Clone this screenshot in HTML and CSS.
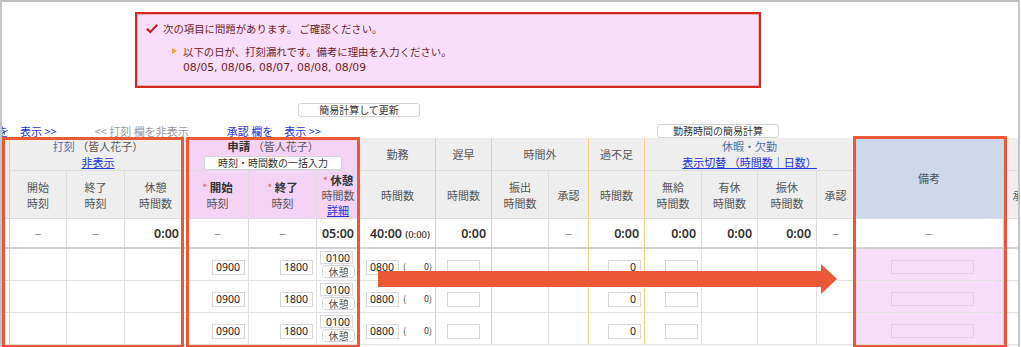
FILE: index.html
```html
<!DOCTYPE html>
<html lang="ja">
<head>
  <meta charset="UTF-8" />
  <title>勤務表</title>
  <link rel="stylesheet" href="styles.css">
</head>
<body>
<div class="frame">

  <div class="alert">
    <p class="alert-title">
      <svg class="check" width="12" height="10" viewBox="0 0 12 10"><path d="M0 5.6 L1.8 4 L4.4 6.4 L10.4 0 L12 1.4 L4.4 9.6 Z" fill="#c3242b"/></svg>
      次の項目に問題があります。&nbsp;ご確認ください。
    </p>
    <div class="alert-item">
      <span class="tri"></span>
      <p>以下の日が、打刻漏れです。備考に理由を入力ください。<br><span class="dates">08/05, 08/06, 08/07, 08/08, 08/09</span></p>
    </div>
  </div>

  <div class="calc-row">
    <button class="btn calc-btn">簡易計算して更新</button>
  </div>

  <div class="toggle-row">
    <a class="toggle-first" href="#">欄を　表示 &gt;&gt;</a>
    <span class="toggle-hide">&lt;&lt; 打刻 欄を非表示</span>
    <a class="toggle-approve" href="#">承認 欄を　表示 &gt;&gt;</a>
    <button class="btn work-btn">勤務時間の簡易計算</button>
  </div>

  <table class="sheet">
    <colgroup>
      <col style="width:8px"><col style="width:57px"><col style="width:58px"><col style="width:62px">
      <col style="width:62px"><col style="width:68px"><col style="width:43px">
      <col style="width:76px"><col style="width:56px"><col style="width:57px"><col style="width:40px">
      <col style="width:56px"><col style="width:57px"><col style="width:56px"><col style="width:59px"><col style="width:38px">
      <col style="width:149px"><col style="width:40px">
    </colgroup>
    <thead>
      <tr class="head1">
        <th class="sep" rowspan="2"></th>
        <th colspan="3"><span class="blue">打刻</span> （皆人花子）<br><a href="#">非表示</a></th>
        <th colspan="3" class="apply"><b class="dark">申請</b> （皆人花子）<br><button class="btn bulk-btn">時刻・時間数の一括入力</button></th>
        <th class="sep">勤務</th>
        <th class="sep blue">遅早</th>
        <th colspan="2" class="sep blue">時間外</th>
        <th class="sep">過不足</th>
        <th colspan="4"><span class="blue">休暇・欠勤</span><br><a href="#">表示切替 （時間数｜日数）</a></th>
        <th rowspan="2" class="note sep">備考</th>
        <th></th>
      </tr>
      <tr class="head2">
        <th>開始<br>時刻</th>
        <th>終了<br>時刻</th>
        <th>休憩<br>時間数</th>
        <th class="apply"><span class="req">*</span> <b class="dark">開始</b><br>時刻</th>
        <th class="apply"><span class="req">*</span> <b class="dark">終了</b><br>時刻</th>
        <th class="apply tight"><span class="req">*</span> <b class="dark">休憩</b><br>時間数<br><a href="#">詳細</a></th>
        <th class="sep">時間数</th>
        <th class="sep">時間数</th>
        <th>振出<br>時間数</th>
        <th class="sep blue">承認</th>
        <th class="sep">時間数</th>
        <th>無給<br>時間数</th>
        <th>有休<br>時間数</th>
        <th>振休<br>時間数</th>
        <th class="blue">承認</th>
        <th class="blue">承認</th>
      </tr>
    </thead>
    <tbody>
      <tr class="total">
        <td class="sep"></td>
        <td class="dash">−</td>
        <td class="dash">−</td>
        <td class="num wide">0:00</td>
        <td class="dash">−</td>
        <td class="dash">−</td>
        <td class="num">05:00</td>
        <td class="num sep">40:00 <small>(0:00)</small></td>
        <td class="num sep">0:00</td>
        <td></td>
        <td class="dash sep">−</td>
        <td class="num sep">0:00</td>
        <td class="num">0:00</td>
        <td class="num">0:00</td>
        <td class="num">0:00</td>
        <td class="dash">−</td>
        <td class="dash sep">−</td>
        <td></td>
      </tr>
      <tr class="day">
        <td class="sep"></td><td></td><td></td><td></td>
        <td class="right"><input class="box" value="0900"></td>
        <td class="right"><input class="box" value="1800"></td>
        <td class="rest"><input class="box" value="0100"><button class="btn rest-btn">休憩</button></td>
        <td class="sep work"><input class="box" value="0800"><span class="paren">(　　0)</span></td>
        <td class="sep"><input class="box" value=""></td>
        <td></td><td class="sep"></td>
        <td class="sep right"><input class="box" value="0"></td>
        <td class="right"><input class="box" value=""></td>
        <td></td><td></td><td></td>
        <td class="memo sep"><input class="memo-box"></td>
        <td></td>
      </tr>
      <tr class="day">
        <td class="sep"></td><td></td><td></td><td></td>
        <td class="right"><input class="box" value="0900"></td>
        <td class="right"><input class="box" value="1800"></td>
        <td class="rest"><input class="box" value="0100"><button class="btn rest-btn">休憩</button></td>
        <td class="sep work"><input class="box" value="0800"><span class="paren">(　　0)</span></td>
        <td class="sep"><input class="box" value=""></td>
        <td></td><td class="sep"></td>
        <td class="sep right"><input class="box" value="0"></td>
        <td class="right"><input class="box" value=""></td>
        <td></td><td></td><td></td>
        <td class="memo sep"><input class="memo-box"></td>
        <td></td>
      </tr>
      <tr class="day">
        <td class="sep"></td><td></td><td></td><td></td>
        <td class="right"><input class="box" value="0900"></td>
        <td class="right"><input class="box" value="1800"></td>
        <td class="rest"><input class="box" value="0100"><button class="btn rest-btn">休憩</button></td>
        <td class="sep work"><input class="box" value="0800"><span class="paren">(　　0)</span></td>
        <td class="sep"><input class="box" value=""></td>
        <td></td><td class="sep"></td>
        <td class="sep right"><input class="box" value="0"></td>
        <td class="right"><input class="box" value=""></td>
        <td></td><td></td><td></td>
        <td class="memo sep"><input class="memo-box"></td>
        <td></td>
      </tr>
    </tbody>
  </table>

  <!-- annotations drawn over the sheet -->
  <div class="mark mark-stamp"></div>
  <div class="mark mark-apply"></div>
  <div class="mark mark-note"></div>
  <svg class="arrow" width="462" height="34" viewBox="0 0 462 34">
    <rect x="2" y="9" width="444" height="16" fill="#eb5836"/>
    <polygon points="445,2 461,17 445,32" fill="#eb5836"/>
  </svg>
</div>
</body>
</html>
```

FILE: styles.css
```css
* {
  margin: 0;
  padding: 0;
  box-sizing: border-box;
}

body {
  font-family: "Noto Sans CJK JP", "Noto Sans", sans-serif;
  font-size: 11px;
  color: #333;
  background: #fff;
}

a {
  color: #1d33e0;
  text-decoration: underline;
}

.frame {
  position: relative;
  width: 1020px;
  height: 347px;
  border-top: 2px solid #bdbdbd;
  border-left: 2px solid #c6c6c6;
  border-right: 2px solid #c6c6c6;
  overflow: hidden;
}

/* === Alert === */
.alert {
  margin: 10px 0 0 133px;
  width: 626px;
  height: 76px;
  background: #f8defa;
  border: 2px solid #d32a20;
  box-shadow: inset 0 0 0 1px #f2aab4;
  padding: 7px 0 0 9px;
  color: #6f2120;
  font-size: 10.4px;
}

.alert-title {
  display: flex;
  align-items: center;
  gap: 5px;
  line-height: 16px;
}

.alert-item {
  display: flex;
  gap: 6px;
  margin: 7px 0 0 26px;
}

.alert-item p {
  line-height: 15px;
}

.dates {
  font-family: "DejaVu Sans", sans-serif;
  font-size: 10.8px;
}

.tri {
  width: 0;
  height: 0;
  margin-top: 4px;
  border-left: 5px solid #f2a33a;
  border-top: 3.5px solid transparent;
  border-bottom: 3.5px solid transparent;
}

/* === Buttons / toggles === */
.btn {
  background: #fff;
  border: 1px solid #d4d4d4;
  border-radius: 3px;
  font-family: "Noto Sans CJK JP", sans-serif;
  font-size: 10px;
  color: #333;
  height: 14px;
  line-height: 12px;
}

.calc-row {
  margin: 13px 0 0 296px;
  height: 14px;
}

.calc-btn {
  width: 122px;
}

.toggle-row {
  display: flex;
  align-items: center;
  height: 14px;
  margin-top: 9px;
  white-space: nowrap;
  line-height: 14px;
}

.toggle-first {
  margin-left: -15px;
}

.toggle-hide {
  margin-left: 38px;
  color: #9a9a9a;
}

.toggle-approve {
  margin-left: 38px;
}

.work-btn {
  width: 122px;
  margin-left: 336px;
}

/* === Sheet === */
.sheet {
  border-collapse: separate;
  border-spacing: 0;
  table-layout: fixed;
  width: 1042px;
}

.sheet th,
.sheet td {
  border-right: 1px solid #dcdcdc;
  border-bottom: 1px solid #dcdcdc;
  text-align: center;
  vertical-align: middle;
  white-space: nowrap;
  overflow: hidden;
}

.sheet th {
  background: #eee;
  color: #555;
  font-weight: normal;
  line-height: 16px;
}

.sheet .sep {
  border-right-color: #f6cb86;
}

.head1 th {
  height: 32px;
}

.head2 th {
  height: 48px;
}

.sheet th.apply {
  background: #f5d3f6;
}

.sheet th.note {
  background: #cdd9ea;
}

.sheet th.tight {
  line-height: 15px;
  padding-top: 2px;
}

.blue {
  color: #4f6fa2;
}

.dark {
  color: #333;
  font-size: 11.5px;
}

.req {
  color: #e25b63;
}

.bulk-btn {
  width: 138px;
  margin-top: 1px;
}

.total td {
  height: 30px;
  border-bottom: 2px solid #d2d2d2;
}

.dash {
  color: #888;
  font-size: 12px;
}

.num {
  font-family: "Noto Sans", sans-serif;
  font-size: 12.5px;
  font-weight: 600;
  color: #333;
  text-align: right !important;
  padding-right: 5px;
}

.num.wide {
  padding-right: 7px;
}

.num small {
  font-size: 9.5px;
  font-weight: 500;
}

.day td {
  height: 32px;
  border-right-color: #e0e0e0;
  border-bottom-color: #e0e0e0;
  padding-top: 3px;
}

.day td.sep {
  border-right-color: #f6cb86;
}

.right {
  text-align: right !important;
  padding-right: 3px;
}

.box {
  width: 33px;
  height: 15px;
  border: 1px solid #d8d8d8;
  background: #fff;
  font-family: "Noto Sans", sans-serif;
  font-size: 10.5px;
  color: #222;
  text-align: right;
  padding: 0 4px 0 0;
  vertical-align: middle;
}

.day td.rest {
  padding-top: 0;
  line-height: 0;
}

.rest .box {
  display: block;
  margin: 0 0 1px 3px;
  height: 13px;
  padding-right: 2px;
}

.rest-btn {
  display: block;
  width: 33px;
  height: 13px;
  margin-left: 5px;
  border-radius: 4px;
  color: #555;
}

.work {
  text-align: left !important;
  padding-left: 6px;
}

.paren {
  font-size: 9px;
  margin-left: 4px;
  color: #444;
}

.day td.memo {
  background: #f8defa;
}

.memo-box {
  width: 83px;
  height: 14px;
  border: 1px solid #ecc7ee;
  background: #f8defa;
  margin-left: 6px;
}

/* === Annotations === */
.mark {
  position: absolute;
  border: 3px solid #eb5836;
}

.mark-stamp {
  left: 0;
  top: 135px;
  width: 182px;
  height: 211px;
}

.mark-apply {
  left: 184px;
  top: 135px;
  width: 174px;
  height: 211px;
}

.mark-note {
  left: 851px;
  top: 134px;
  width: 154px;
  height: 212px;
}

.arrow {
  position: absolute;
  left: 374px;
  top: 260px;
}
```
